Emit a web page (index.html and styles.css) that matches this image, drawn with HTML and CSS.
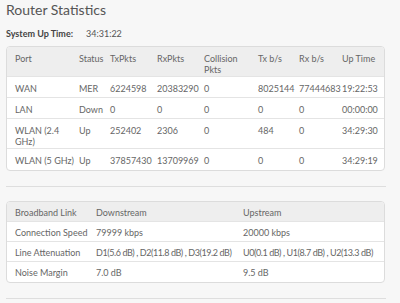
FILE: index.html
```html
<!DOCTYPE html>
<html>
<head>
<meta charset="utf-8">
<link rel="stylesheet" href="styles.css">
</head>
<body>
<div class="page">
  <h1 class="title">Router Statistics</h1>
  <div class="uptime"><span class="label">System Up Time:</span><span class="value">34:31:22</span></div>

  <div class="card">
    <table class="grid ports">
      <colgroup>
        <col class="c-port"><col class="c-status"><col class="c-tx"><col class="c-rx"><col class="c-coll"><col class="c-txb"><col class="c-rxb"><col class="c-up">
      </colgroup>
      <thead>
        <tr><th>Port</th><th>Status</th><th>TxPkts</th><th>RxPkts</th><th>Collision<br>Pkts</th><th>Tx b/s</th><th>Rx b/s</th><th>Up Time</th></tr>
      </thead>
      <tbody>
        <tr><td>WAN</td><td>MER</td><td>6224598</td><td>20383290</td><td>0</td><td>8025144</td><td>77444683</td><td>19:22:53</td></tr>
        <tr><td>LAN</td><td>Down</td><td>0</td><td>0</td><td>0</td><td>0</td><td>0</td><td>00:00:00</td></tr>
        <tr><td>WLAN (2.4<br>GHz)</td><td>Up</td><td>252402</td><td>2306</td><td>0</td><td>484</td><td>0</td><td>34:29:30</td></tr>
        <tr><td>WLAN (5 GHz)</td><td>Up</td><td>37857430</td><td>13709969</td><td>0</td><td>0</td><td>0</td><td>34:29:19</td></tr>
      </tbody>
    </table>
  </div>

  <div class="rule"></div>

  <div class="card">
    <table class="grid link">
      <colgroup>
        <col class="c-name"><col class="c-down"><col class="c-upstream">
      </colgroup>
      <thead>
        <tr><th>Broadband Link</th><th>Downstream</th><th>Upstream</th></tr>
      </thead>
      <tbody>
        <tr><td>Connection Speed</td><td>79999 kbps</td><td>20000 kbps</td></tr>
        <tr><td>Line Attenuation</td><td class="att">D1(5.6 dB) , D2(11.8 dB) , D3(19.2 dB)</td><td class="att">U0(0.1 dB) , U1(8.7 dB) , U2(13.3 dB)</td></tr>
        <tr><td>Noise Margin</td><td>7.0 dB</td><td>9.5 dB</td></tr>
      </tbody>
    </table>
  </div>

  <div class="rule"></div>
</div>
</body>
</html>
```

FILE: styles.css
```css
html, body {
  margin: 0;
  padding: 0;
  background: #f7f7f7;
}

body {
  font-family: Lato, "Open Sans", sans-serif;
  color: #666;
}

.page {
  padding: 1px 0 0 6px;
  width: 380px;
}

.title {
  margin: 0;
  font-size: 14px;
  line-height: 18px;
  font-weight: 400;
  color: #555;
}

.uptime {
  margin-top: 9px;
  font-size: 9px;
  line-height: 12px;
  display: flex;
}

.uptime .label {
  width: 80px;
  font-weight: 700;
  color: #444;
}

.uptime .value {
  color: #555;
}

.card {
  margin-top: 6px;
  width: 379px;
  background: #fff;
  border: 1px solid #dcdcdc;
  border-radius: 4px;
  overflow: hidden;
  box-sizing: border-box;
}

.rule {
  margin: 15px 0 14px;
  width: 380px;
  height: 1px;
  background: #dedede;
}

.rule + .card {
  margin-top: 0;
}

.grid {
  width: 100%;
  table-layout: fixed;
  border-collapse: collapse;
  font-size: 9px;
  line-height: 11px;
}

.grid th,
.grid td {
  text-align: left;
  vertical-align: top;
  font-weight: 400;
  white-space: nowrap;
  padding: 6px 0 1px 8px;
  color: #666;
}

.grid thead th {
  background: #eeeeee;
}

.grid tbody td {
  border-top: 1px solid #e4e4e4;
}

.grid td.att {
  letter-spacing: -0.42px;
}

.ports tbody tr {
  height: 21px;
}

.link tr {
  height: 20px;
}

.link th,
.link td {
  padding-top: 5px;
}

.c-port { width: 64px; }
.c-status { width: 31px; }
.c-tx { width: 47px; }
.c-rx { width: 47px; }
.c-coll { width: 54px; }
.c-txb { width: 41px; }
.c-rxb { width: 43px; }
.c-up { width: auto; }

.c-name { width: 81px; }
.c-down { width: 147px; }
.c-upstream { width: auto; }
```
